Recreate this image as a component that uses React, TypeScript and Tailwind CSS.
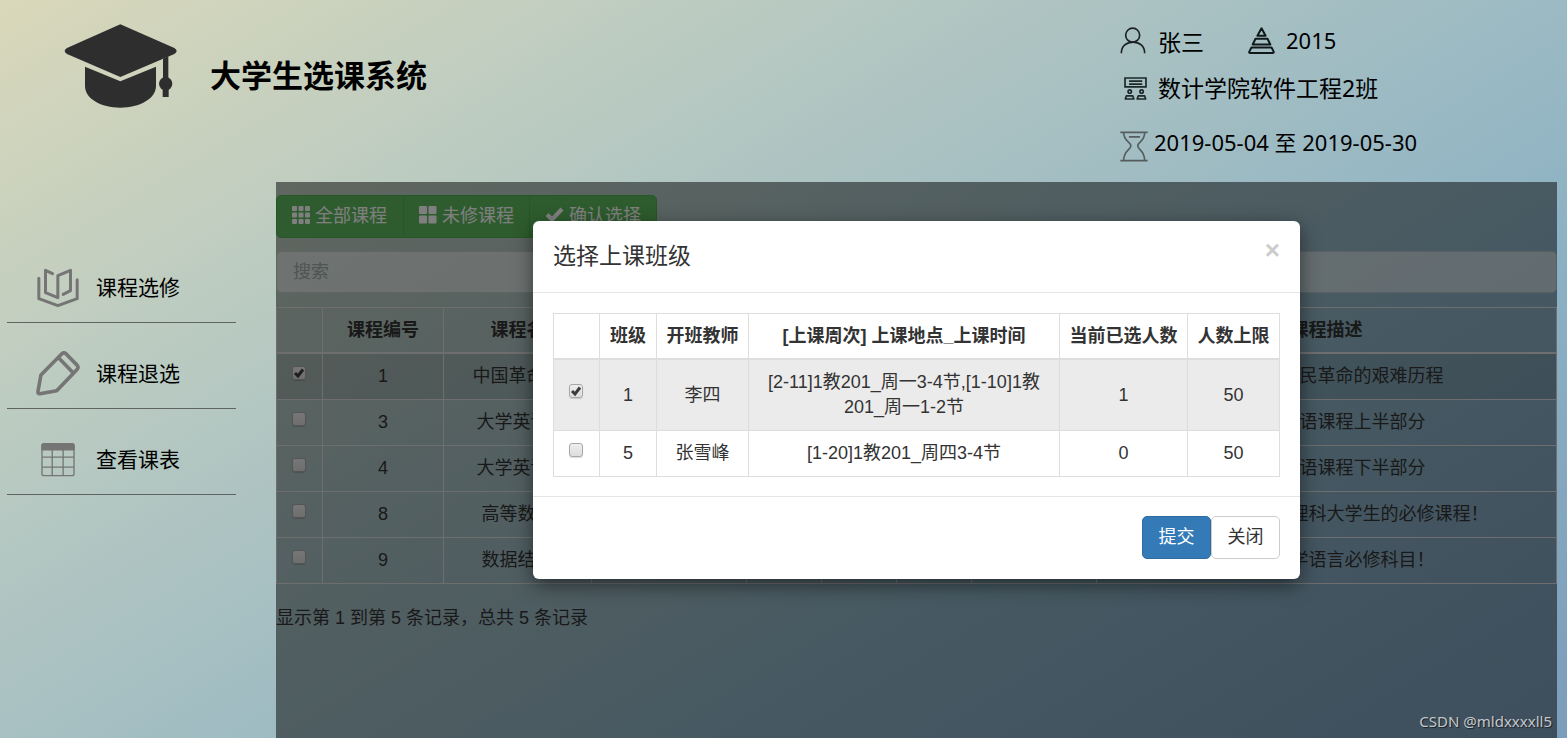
import { ReactNode } from 'react';

type Course = { id: number; name: string; desc: string; checked: boolean };
type ClassRow = { id: number; teacher: string; schedule: string; picked: number; limit: number; checked: boolean };

const courses: Course[] = [
  { id: 1, name: '中国革命史', desc: '介绍中国人民革命的艰难历程', checked: true },
  { id: 3, name: '大学英语1', desc: '是大学英语课程上半部分', checked: false },
  { id: 4, name: '大学英语2', desc: '是大学英语课程下半部分', checked: false },
  { id: 8, name: '高等数学', desc: '这是所有工科和理科大学生的必修课程！', checked: false },
  { id: 9, name: '数据结构', desc: '计算机科学语言必修科目！', checked: false },
];

const classes: ClassRow[] = [
  { id: 1, teacher: '李四', schedule: '[2-11]1教201_周一3-4节,[1-10]1教201_周一1-2节', picked: 1, limit: 50, checked: true },
  { id: 5, teacher: '张雪峰', schedule: '[1-20]1教201_周四3-4节', picked: 0, limit: 50, checked: false },
];

const CapLogo = () => (
  <svg viewBox="194 72 340 252" className="w-[114px] h-[84px] shrink-0" fill="#2e2e2e">
    <path d="M362 73 L524 144 Q531 148 531 153 Q531 158 524 162 L362 231 L202 162 Q195 158 195 153 Q195 148 202 144 Z" />
    <path d="M256 200 L362 244 L469 200 V258 C469 296 420 323 362 323 C304 323 256 296 256 258 Z" />
    <path d="M490 176 L506 168 V235 H490 Z" />
    <circle cx="498" cy="251" r="20" />
    <path d="M489 262 H507 V291 H489 Z" />
  </svg>
);

const PersonIcon = () => (
  <svg viewBox="120 80 78 80" className="w-[26px] h-[27px]" fill="none" stroke="#1c2224" strokeWidth="5">
    <circle cx="158" cy="104" r="21" />
    <path d="M124 158 C124 136 140 125 159 125 C178 125 194 136 194 158" />
  </svg>
);

const GradeIcon = () => (
  <svg viewBox="503 80 80 80" className="w-[27px] h-[27px]" fill="none" stroke="#10181a" strokeWidth="6" strokeLinejoin="round">
    <path d="M543 84 L531 106 H555 Z" />
    <path d="M525 115 H561 L569 132 H517 Z" />
    <path d="M513 141 H573 L579 153 Q580 157 576 157 H510 Q505 157 507 153 Z" />
  </svg>
);

const ClassroomIcon = () => (
  <svg viewBox="131 227 68 68" className="w-[23px] h-[23px]" fill="none" stroke="#1c2829" strokeWidth="5">
    <path d="M134 230 H196 V256 H134 Z M146 239 H185 M146 248 H185" />
    <circle cx="148" cy="270" r="5" />
    <circle cx="183" cy="270" r="5" />
    <path d="M135 292 L138 283 H157 L160 292 Z M170 292 L173 283 H192 L195 292 Z" strokeLinejoin="round" />
  </svg>
);

const HourglassIcon = () => (
  <svg viewBox="120 391 85 94" className="w-[28px] h-[31px]" fill="none" stroke="#555d5f" strokeWidth="5">
    <path d="M121 395 H204 M121 481 H204 M147 409 H181" />
    <path d="M131 395 C131 424 153 424 153 436 C153 448 131 450 131 481" />
    <path d="M195 395 C195 424 174 424 174 436 C174 448 195 450 195 481" />
  </svg>
);

const BookIcon = () => (
  <svg viewBox="109 83 128 120" className="w-[43px] h-[40px]" fill="none" stroke="#757575" strokeWidth="9" strokeLinecap="round" strokeLinejoin="round">
    <path d="M117 114 V175 L174 196 L232 175 V118" />
    <path d="M158 100 L137 90 V157 L174 172 V106 L212 90 V151 L190 162" />
  </svg>
);

const PencilIcon = () => (
  <svg viewBox="107 332 134 137" className="w-[44px] h-[45px]" fill="none" stroke="#757575" strokeWidth="11" strokeLinejoin="round">
    <path d="M122 405 L185 341 Q192 335 199 341 L232 375 Q238 382 232 388 L170 453 L119 462 Q112 463 113 455 Z" />
    <path d="M175 352 L220 398" />
  </svg>
);

const TableIcon = () => (
  <svg viewBox="123 606 103 103" className="w-[34px] h-[34px]" fill="none" stroke="#757575" strokeWidth="4">
    <rect x="126" y="608" width="97" height="97" rx="6" />
    <path d="M126 614 Q126 608 132 608 H217 Q223 608 223 614 V627 H126 Z" fill="#757575" />
    <path d="M157 627 V705 M190 627 V705 M126 649 H223 M126 679 H223" />
  </svg>
);

const GridIcon = () => (
  <svg viewBox="0 0 18 18" className="-mt-1 w-[18px] h-[18px]" fill="currentColor">
    {[0, 6.5, 13].map(y => [0, 6.5, 13].map(x => <rect key={`${x}-${y}`} x={x} y={y} width="5" height="5" rx="1" />))}
  </svg>
);

const LargeGridIcon = () => (
  <svg viewBox="0 0 18 18" className="-mt-1 w-[18px] h-[18px]" fill="currentColor">
    {[0, 9.5].map(y => [0, 9.5].map(x => <rect key={`${x}-${y}`} x={x} y={y} width="8" height="8" rx="1" />))}
  </svg>
);

const OkIcon = () => (
  <svg viewBox="0 0 19 18" className="-mt-1 w-[19px] h-[18px]" fill="currentColor">
    <path d="M0.5 10 L3.5 7 L7 10.5 L15.5 1.5 L18.5 4.5 L7 16.5 Z" />
  </svg>
);

const Checkbox = ({ label, checked }: { label: string; checked: boolean }) => (
  <label className="mx-auto mb-2 grid w-[14px]">
    <input
      type="checkbox"
      aria-label={label}
      defaultChecked={checked}
      className="peer col-start-1 row-start-1 w-[14px] h-[14px] appearance-none rounded-[3px] border border-[#a8a8a8] bg-linear-to-b from-[#eeeeee] to-[#dddddd] shadow-[0_1px_1px_rgba(0,0,0,0.15)]"
    />
    <svg viewBox="0 0 14 14" className="pointer-events-none invisible peer-checked:visible z-10 col-start-1 row-start-1 w-[14px] h-[14px]" fill="none" stroke="#3c3c3c" strokeWidth="3">
      <path d="M3 7 L6 10 L11 3.5" />
    </svg>
  </label>
);

const MenuItem = ({ icon, text }: { icon: ReactNode; text: string }) => (
  <li className="h-[86px] border-b border-[#5f6462]">
    <a href="#" className="flex h-full items-center pt-4 pl-[28px] text-[21px] text-black">
      <span className="flex w-[45px] justify-center">{icon}</span>
      <span className="pl-4">{text}</span>
    </a>
  </li>
);

const Header = () => (
  <header className="flex h-[182px] shrink-0">
    <div className="flex flex-1 items-start pt-6 pl-16">
      <CapLogo />
      <h1 className="pt-[30px] pl-8 text-[31px] leading-[46px] font-bold">大学生选课系统</h1>
    </div>
    <div className="w-[447px] pt-[23px] font-['Noto_Sans','Noto_Sans_CJK_SC',sans-serif] text-[22px] leading-[30px]">
      <div className="flex items-center">
        <span className="flex w-[38px]"><PersonIcon /></span>
        <span className="w-[90px] pt-1 text-[23px]">张三</span>
        <span className="flex w-[38px]"><GradeIcon /></span>
        <span>2015</span>
      </div>
      <div className="mt-4 flex items-center">
        <span className="flex w-[38px] pl-1"><ClassroomIcon /></span>
        <span className="text-[23px]">数计学院软件工程2班</span>
      </div>
      <div className="mt-6 flex items-start">
        <span className="flex w-[34px] pt-1"><HourglassIcon /></span>
        <span>2019-05-04 至 2019-05-30</span>
      </div>
    </div>
  </header>
);

const toolButton = 'flex h-[43px] items-center gap-[5px] border border-[#4cae4c] bg-[#5cb85c] px-[15px] text-white';
const cell = 'border border-[#dddddd] p-[10px]';

const CourseTable = () => (
  <table className="mt-[14px] w-full table-fixed border-collapse text-center">
    <colgroup>
      <col className="w-[46px]" />
      <col className="w-[121px]" />
      <col className="w-[148px]" />
      <col className="w-[155px]" />
      <col className="w-[75px]" />
      <col className="w-[75px]" />
      <col className="w-[75px]" />
      <col className="w-[125px]" />
      <col />
    </colgroup>
    <thead>
      <tr>
        {['', '课程编号', '课程名', '', '', '', '', '', '课程描述'].map((h, i) => (
          <th key={i} className={`${cell} border-b-2 pb-[9px]`}>{h}</th>
        ))}
      </tr>
    </thead>
    <tbody>
      {courses.map(c => (
        <tr key={c.id} className={c.checked ? 'bg-black/8' : ''}>
          <td className={`${cell} py-0 pr-3`}><Checkbox label={c.name} checked={c.checked} /></td>
          <td className={cell}>{c.id}</td>
          <td className={cell}>{c.name}</td>
          <td className={cell} />
          <td className={cell} />
          <td className={cell} />
          <td className={cell} />
          <td className={cell} />
          <td className={cell}>{c.desc}</td>
        </tr>
      ))}
    </tbody>
  </table>
);

const ClassModal = () => (
  <div role="dialog" aria-labelledby="modal-title" className="w-[767px] max-w-full rounded-md bg-white shadow-[0_6px_19px_rgba(0,0,0,0.5)]">
    <div className="flex items-start justify-between border-b border-[#e5e5e5] p-5">
      <h4 id="modal-title" className="text-[23px] leading-[31px]">选择上课班级</h4>
      <button type="button" aria-label="关闭" className="text-[26px] leading-[18px] font-bold text-[#cccccc]">×</button>
    </div>
    <div className="px-5 pt-5 pb-[19px]">
      <table className="w-full table-fixed border-collapse text-center">
        <colgroup>
          <col className="w-[46px]" />
          <col className="w-[57px]" />
          <col className="w-[92px]" />
          <col />
          <col className="w-[128px]" />
          <col className="w-[92px]" />
        </colgroup>
        <thead>
          <tr>
            {['', '班级', '开班教师', '[上课周次] 上课地点_上课时间', '当前已选人数', '人数上限'].map((h, i) => (
              <th key={i} className="border border-b-2 border-[#dddddd] px-0 pt-[10px] pb-[9px]">{h}</th>
            ))}
          </tr>
        </thead>
        <tbody>
          {classes.map(c => (
            <tr key={c.id} className={c.checked ? 'bg-[#ebebeb]' : ''}>
              <td className={`${cell} py-0 pr-3`}><Checkbox label={c.teacher} checked={c.checked} /></td>
              <td className={cell}>{c.id}</td>
              <td className={cell}>{c.teacher}</td>
              <td className={cell}>{c.schedule}</td>
              <td className={cell}>{c.picked}</td>
              <td className={cell}>{c.limit}</td>
            </tr>
          ))}
        </tbody>
      </table>
    </div>
    <div className="flex justify-end border-t border-[#e5e5e5] px-5 pt-[19px] pb-5">
      <button type="button" className="h-[43px] w-[69px] rounded-[5px] border border-[#2e6da4] bg-[#337ab7] text-white">提交</button>
      <button type="button" className="h-[43px] w-[69px] rounded-[5px] border border-[#cccccc] bg-white">关闭</button>
    </div>
  </div>
);

export default function App() {
  return (
    <div className="relative flex min-h-screen flex-col bg-[linear-gradient(149deg,#dad8ba_0%,#cbd2bd_12%,#bbcbc1_26%,#a9c1c2_43%,#8db2c4_70%,#7c9dbb_100%)] font-['Liberation_Sans','Noto_Sans_CJK_SC',sans-serif] text-black">
      <Header />
      <div className="flex flex-1">
        <nav className="w-[276px] shrink-0 pt-[55px] pr-10 pl-[7px]">
          <ul>
            <MenuItem icon={<BookIcon />} text="课程选修" />
            <MenuItem icon={<PencilIcon />} text="课程退选" />
            <MenuItem icon={<TableIcon />} text="查看课表" />
          </ul>
        </nav>

        <main className="relative mr-[10px] min-w-0 flex-1 pt-[13px] text-[18px] leading-[25px] text-[#333333]">
          <div className="flex">
            <button type="button" className={`${toolButton} rounded-l-[5px] pr-4`}><GridIcon />全部课程</button>
            <button type="button" className={`${toolButton} -ml-px rounded-none`}><LargeGridIcon />未修课程</button>
            <button type="button" className={`${toolButton} -ml-px rounded-r-[5px]`}><OkIcon />确认选择</button>
          </div>
          <input
            type="text"
            aria-label="搜索"
            placeholder="搜索"
            className="mt-[13px] block h-[42px] w-full rounded-[5px] border border-[#cccccc] bg-white px-4 opacity-50 placeholder:text-[#888888]"
          />
          <CourseTable />
          <p className="mt-[22px]">显示第 1 到第 5 条记录，总共 5 条记录</p>

          {/* modal layer */}
          <div className="absolute inset-0 z-20 flex items-start justify-center bg-black/50 pt-[39px]">
            <ClassModal />
          </div>
        </main>
      </div>
      <span className="absolute right-[15px] bottom-[7px] z-30 font-['Noto_Sans',sans-serif] text-[15px] leading-[20px] text-[#c3c8cc] [text-shadow:1px_1px_1px_rgba(0,0,0,0.6)]">
        CSDN @mldxxxxll5
      </span>
    </div>
  );
}
